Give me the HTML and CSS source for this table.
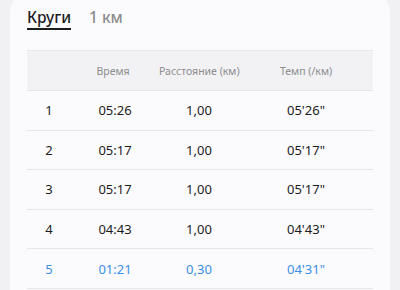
FILE: index.html
```html
<!DOCTYPE html>
<html lang="ru">
<head>
<meta charset="utf-8">
<link rel="stylesheet" href="styles.css">
</head>
<body>
<div class="card">
  <div class="tabs">
    <span class="tab active">Круги</span>
    <span class="tab">1 км</span>
  </div>
  <div class="table">
    <div class="row head">
      <span></span><span>Время</span><span>Расстояние (км)</span><span>Темп (/км)</span>
    </div>
    <div class="row"><span>1</span><span>05:26</span><span>1,00</span><span>05'26"</span></div>
    <div class="row"><span>2</span><span>05:17</span><span>1,00</span><span>05'17"</span></div>
    <div class="row"><span>3</span><span>05:17</span><span>1,00</span><span>05'17"</span></div>
    <div class="row"><span>4</span><span>04:43</span><span>1,00</span><span>04'43"</span></div>
    <div class="row current"><span>5</span><span>01:21</span><span>0,30</span><span>04'31"</span></div>
  </div>
</div>
</body>
</html>
```

FILE: styles.css
```css
html, body {
  margin: 0;
  padding: 0;
  background: #f1f1f3;
  font-family: "Noto Sans", "Open Sans", sans-serif;
  overflow: hidden;
  height: 290px;
}
.card {
  margin: -8px 10px 0 10px;
  background: #fbfbfd;
  border-radius: 20px;
  padding: 15px 17px 0 17px;
  height: 320px;
  box-sizing: border-box;
}
.tabs {
  display: flex;
  gap: 18px;
  height: 29px;
  align-items: flex-start;
}
.tab {
  font-size: 15.5px;
  line-height: 20px;
  color: #8a8a8c;
  font-weight: 500;
  padding-bottom: 1px;
  border-bottom: 2px solid transparent;
}
.tab.active {
  color: #1c1c1e;
  border-bottom-color: #1c1c1e;
}
.table {
  margin-top: 14px;
}
.row {
  display: grid;
  grid-template-columns: 44px 88px 80px 1fr;
  height: 39.6px;
  align-items: center;
  border-bottom: 1px solid #e6e6e8;
  box-sizing: border-box;
  font-size: 13px;
  color: #1c1c1e;
}
.row span {
  text-align: center;
  white-space: nowrap;
}
.row.head {
  height: 41px;
  background: #f2f2f4;
  border-top: 1px solid #e8e8ea;
  font-size: 10.5px;
  color: #8c8c8e;
}
.row.head span:nth-child(2) {
  padding-right: 4px;
}
.row.current {
  color: #3a8ee6;
}
```
